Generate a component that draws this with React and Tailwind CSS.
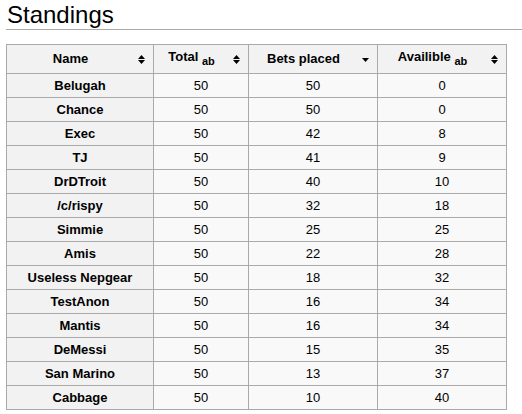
import React from "react";

const rows = [
  ["Belugah", 50, 50, 0],
  ["Chance", 50, 50, 0],
  ["Exec", 50, 42, 8],
  ["TJ", 50, 41, 9],
  ["DrDTroit", 50, 40, 10],
  ["/c/rispy", 50, 32, 18],
  ["Simmie", 50, 25, 25],
  ["Amis", 50, 22, 28],
  ["Useless Nepgear", 50, 18, 32],
  ["TestAnon", 50, 16, 34],
  ["Mantis", 50, 16, 34],
  ["DeMessi", 50, 15, 35],
  ["San Marino", 50, 13, 37],
  ["Cabbage", 50, 10, 40],
];

function Both() {
  return (
    <svg width="7" height="9" viewBox="0 0 7 9" className="ml-[4px] shrink-0">
      <polygon points="0,4 3.5,0 7,4" fill="#000" />
      <polygon points="0,5 7,5 3.5,9" fill="#000" />
    </svg>
  );
}

function Down() {
  return (
    <svg width="7" height="9" viewBox="0 0 7 9" className="ml-[4px] shrink-0">
      <polygon points="0,3 7,3 3.5,7" fill="#000" />
    </svg>
  );
}

function Head({ children, icon }) {
  return (
    <th className="border border-[#aaa] bg-[#f2f2f2] h-[29px] p-0 pr-[8px] font-bold">
      <div className="flex items-center">
        <span className="flex-1 text-center">{children}</span>
        {icon}
      </div>
    </th>
  );
}

export default function App() {
  return (
    <div
      className="bg-white w-[522px] h-[414px] pl-[6px] text-black"
      style={{ fontFamily: '"Liberation Sans", Arial, sans-serif' }}
    >
      <h2 className="text-[24px] leading-[28px] pt-[1px] pl-[1px] border-b border-[#aaa] font-normal">
        Standings
      </h2>
      <table className="mt-[14px] border-collapse table-fixed w-[500px] text-[13px] border border-[#aaa]">
        <colgroup>
          <col className="w-[147px]" />
          <col className="w-[95px]" />
          <col className="w-[129px]" />
          <col className="w-[129px]" />
        </colgroup>
        <thead>
          <tr>
            <Head icon={<Both />}>Name</Head>
            <Head icon={<Both />}>
              <span className="relative -top-[2px]">
                Total <sub className="text-[11px] leading-none relative bottom-[-4px]">ab</sub>
              </span>
            </Head>
            <Head icon={<Down />}>Bets placed</Head>
            <Head icon={<Both />}>
              <span className="relative -top-[2px]">
                Availible <sub className="text-[11px] leading-none relative bottom-[-4px]">ab</sub>
              </span>
            </Head>
          </tr>
        </thead>
        <tbody>
          {rows.map((r) => (
            <tr key={r[0]}>
              <th className="border border-[#aaa] bg-[#f2f2f2] h-[24px] p-0 font-bold text-center">
                {r[0]}
              </th>
              <td className="border border-[#aaa] bg-[#f9f9f9] p-0 text-center">{r[1]}</td>
              <td className="border border-[#aaa] bg-[#f9f9f9] p-0 text-center">{r[2]}</td>
              <td className="border border-[#aaa] bg-[#f9f9f9] p-0 text-center">{r[3]}</td>
            </tr>
          ))}
        </tbody>
      </table>
    </div>
  );
}
